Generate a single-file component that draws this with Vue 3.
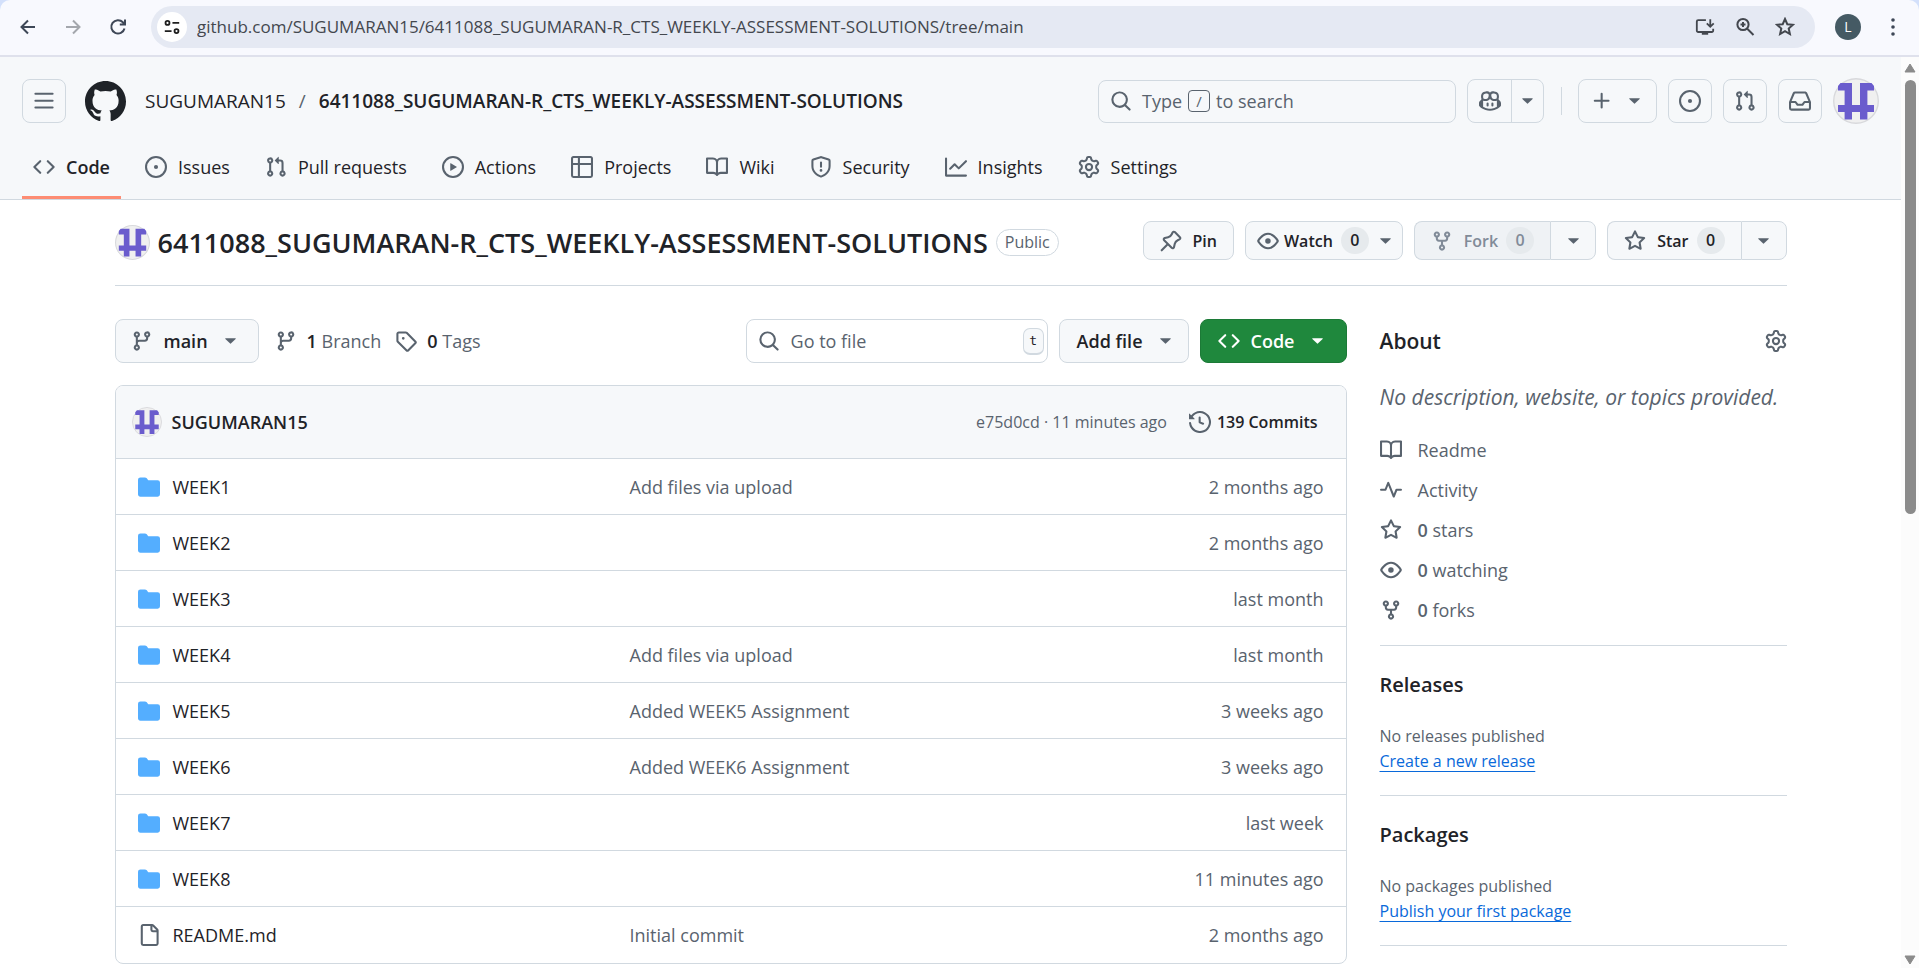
<script setup>
import { h } from 'vue'

const paths = {
  menu: 'M1 2.75A.75.75 0 0 1 1.75 2h12.5a.75.75 0 0 1 0 1.5H1.75A.75.75 0 0 1 1 2.75Zm0 5A.75.75 0 0 1 1.75 7h12.5a.75.75 0 0 1 0 1.5H1.75A.75.75 0 0 1 1 7.75ZM1.75 12h12.5a.75.75 0 0 1 0 1.5H1.75a.75.75 0 0 1 0-1.5Z',
  github: 'M8 0c4.42 0 8 3.58 8 8a8.013 8.013 0 0 1-5.45 7.59c-.4.08-.55-.17-.55-.38 0-.27.01-1.13.01-2.2 0-.75-.25-1.23-.54-1.48 1.78-.2 3.65-.88 3.65-3.95 0-.88-.31-1.59-.82-2.15.08-.2.36-1.02-.08-2.12 0 0-.67-.22-2.2.82-.64-.18-1.32-.27-2-.27-.68 0-1.36.09-2 .27-1.53-1.03-2.2-.82-2.2-.82-.44 1.1-.16 1.92-.08 2.12-.51.56-.82 1.28-.82 2.15 0 3.06 1.86 3.75 3.64 3.95-.23.2-.44.55-.51 1.07-.46.21-1.61.55-2.33-.66-.15-.24-.6-.83-1.23-.82-.67.01-.27.38.01.53.34.19.73.9.82 1.13.16.45.68 1.31 2.69.94 0 .67.01 1.3.01 1.49 0 .21-.15.45-.55.38A7.995 7.995 0 0 1 0 8c0-4.42 3.58-8 8-8Z',
  code: 'm11.28 3.22 4.25 4.25a.75.75 0 0 1 0 1.06l-4.25 4.25a.749.749 0 0 1-1.275-.326.749.749 0 0 1 .215-.734L13.94 8l-3.72-3.72a.749.749 0 0 1 .326-1.275.749.749 0 0 1 .734.215Zm-6.56 0a.751.751 0 0 1 1.042.018.751.751 0 0 1 .018 1.042L2.06 8l3.72 3.72a.749.749 0 0 1-.326 1.275.749.749 0 0 1-.734-.215L.47 8.53a.75.75 0 0 1 0-1.06Z',
  issue: 'M8 9.5a1.5 1.5 0 1 0 0-3 1.5 1.5 0 0 0 0 3ZM8 0a8 8 0 1 1 0 16A8 8 0 0 1 8 0ZM1.5 8a6.5 6.5 0 1 0 13 0 6.5 6.5 0 0 0-13 0Z',
  pull: 'M1.5 3.25a2.25 2.25 0 1 1 3 2.122v5.256a2.251 2.251 0 1 1-1.5 0V5.372A2.25 2.25 0 0 1 1.5 3.25Zm5.677-.177L9.573.677A.25.25 0 0 1 10 .854V2.5h1A2.5 2.5 0 0 1 13.5 5v5.628a2.251 2.251 0 1 1-1.5 0V5a1 1 0 0 0-1-1h-1v1.646a.25.25 0 0 1-.427.177L7.177 3.427a.25.25 0 0 1 0-.354ZM3.75 2.5a.75.75 0 1 0 0 1.5.75.75 0 0 0 0-1.5Zm0 9.5a.75.75 0 1 0 0 1.5.75.75 0 0 0 0-1.5Zm8.25.75a.75.75 0 1 0 1.5 0 .75.75 0 0 0-1.5 0Z',
  play: 'M8 0a8 8 0 1 1 0 16A8 8 0 0 1 8 0ZM1.5 8a6.5 6.5 0 1 0 13 0 6.5 6.5 0 0 0-13 0Zm4.879-2.773 4.264 2.559a.25.25 0 0 1 0 .428l-4.264 2.559A.25.25 0 0 1 6 10.559V5.442a.25.25 0 0 1 .379-.215Z',
  table: 'M0 1.75C0 .784.784 0 1.75 0h12.5C15.216 0 16 .784 16 1.75v12.5A1.75 1.75 0 0 1 14.25 16H1.75A1.75 1.75 0 0 1 0 14.25ZM6.5 6.5v8h7.75a.25.25 0 0 0 .25-.25V6.5Zm8-1.5V1.75a.25.25 0 0 0-.25-.25H6.5V5Zm-13 1.5v7.75c0 .138.112.25.25.25H5v-8ZM5 5V1.5H1.75a.25.25 0 0 0-.25.25V5Z',
  book: 'M0 1.75A.75.75 0 0 1 .75 1h4.253c1.227 0 2.317.59 3 1.501A3.743 3.743 0 0 1 11.006 1h4.245a.75.75 0 0 1 .75.75v10.5a.75.75 0 0 1-.75.75h-4.507a2.25 2.25 0 0 0-1.591.659l-.622.621a.75.75 0 0 1-1.06 0l-.622-.621A2.25 2.25 0 0 0 5.258 13H.75a.75.75 0 0 1-.75-.75Zm7.251 10.324.004-5.073-.002-2.253A2.25 2.25 0 0 0 5.003 2.5H1.5v9h3.757a3.75 3.75 0 0 1 1.994.574ZM8.755 4.75l-.004 7.322a3.752 3.752 0 0 1 1.992-.572H14.5v-9h-3.495a2.25 2.25 0 0 0-2.25 2.25Z',
  shield: 'M7.467.133a1.748 1.748 0 0 1 1.066 0l5.25 1.68A1.75 1.75 0 0 1 15 3.48V7c0 1.566-.32 3.182-1.303 4.682-.983 1.498-2.585 2.813-5.032 3.855a1.697 1.697 0 0 1-1.33 0c-2.447-1.042-4.049-2.357-5.032-3.855C1.32 10.182 1 8.566 1 7V3.48a1.75 1.75 0 0 1 1.217-1.667Zm.61 1.429a.25.25 0 0 0-.153 0l-5.25 1.68a.25.25 0 0 0-.174.238V7c0 1.358.275 2.666 1.057 3.86.784 1.194 2.121 2.34 4.366 3.297a.196.196 0 0 0 .154 0c2.245-.956 3.582-2.104 4.366-3.298C13.225 9.666 13.5 8.36 13.5 7V3.48a.251.251 0 0 0-.174-.237l-5.25-1.68ZM8.75 4.75v3a.75.75 0 0 1-1.5 0v-3a.75.75 0 0 1 1.5 0ZM9 10.5a1 1 0 1 1-2 0 1 1 0 0 1 2 0Z',
  graph: 'M1.5 1.75V13.5h13.75a.75.75 0 0 1 0 1.5H.75a.75.75 0 0 1-.75-.75V1.75a.75.75 0 0 1 1.5 0Zm14.28 2.53-5.25 5.25a.75.75 0 0 1-1.06 0L7 7.06 4.28 9.78a.751.751 0 0 1-1.042-.018.751.751 0 0 1-.018-1.042l3.25-3.25a.75.75 0 0 1 1.06 0L10 7.94l4.72-4.72a.751.751 0 0 1 1.042.018.751.751 0 0 1 .018 1.042Z',
  gear: 'M8 0a8.2 8.2 0 0 1 .701.031C9.444.095 9.99.645 10.16 1.29l.288 1.107c.018.066.079.158.212.224.231.114.454.243.668.386.123.082.233.09.299.071l1.103-.303c.644-.176 1.392.021 1.82.63.27.385.506.792.704 1.218.315.675.111 1.422-.364 1.891l-.814.806c-.049.048-.098.147-.088.294.016.257.016.515 0 .772-.01.147.038.246.088.294l.814.806c.475.469.679 1.216.364 1.891a7.977 7.977 0 0 1-.704 1.217c-.428.61-1.176.807-1.82.63l-1.102-.302c-.067-.019-.177-.011-.3.071a5.909 5.909 0 0 1-.668.386c-.133.066-.194.158-.211.224l-.29 1.106c-.168.646-.715 1.196-1.458 1.26a8.006 8.006 0 0 1-1.402 0c-.743-.064-1.289-.614-1.458-1.26l-.289-1.106c-.018-.066-.079-.158-.212-.224a5.738 5.738 0 0 1-.668-.386c-.123-.082-.233-.09-.299-.071l-1.103.303c-.644.176-1.392-.021-1.82-.63a8.12 8.12 0 0 1-.704-1.218c-.315-.675-.111-1.422.363-1.891l.815-.806c.05-.048.098-.147.088-.294a6.214 6.214 0 0 1 0-.772c.01-.147-.038-.246-.088-.294l-.815-.806C.635 6.045.431 5.298.746 4.623a7.92 7.92 0 0 1 .704-1.217c.428-.61 1.176-.807 1.82-.63l1.102.302c.067.019.177.011.3-.071.214-.143.437-.272.668-.386.133-.066.194-.158.211-.224l.29-1.106C6.009.645 6.556.095 7.299.03 7.53.01 7.764 0 8 0Zm-.571 1.525c-.036.003-.108.036-.137.146l-.289 1.105c-.147.561-.549.967-.998 1.189-.173.086-.34.183-.5.29-.417.278-.97.423-1.529.27l-1.103-.303c-.109-.03-.175.016-.195.045-.22.312-.412.644-.573.99-.014.031-.021.11.059.19l.815.806c.411.406.562.957.53 1.456a4.709 4.709 0 0 0 0 .582c.032.499-.119 1.05-.53 1.456l-.815.806c-.081.08-.073.159-.059.19.162.346.353.677.573.989.02.03.085.076.195.046l1.102-.303c.56-.153 1.113-.008 1.53.27.161.107.328.204.501.29.447.222.85.629.997 1.189l.289 1.105c.029.109.101.143.137.146a6.6 6.6 0 0 0 1.142 0c.036-.003.108-.036.137-.146l.289-1.105c.147-.561.549-.967.998-1.189.173-.086.34-.183.5-.29.417-.278.97-.423 1.529-.27l1.103.303c.109.029.175-.016.195-.045.22-.313.411-.644.573-.99.014-.031.021-.11-.059-.19l-.815-.806c-.411-.406-.562-.957-.53-1.456a4.709 4.709 0 0 0 0-.582c-.032-.499.119-1.05.53-1.456l.815-.806c.081-.08.073-.159.059-.19a6.464 6.464 0 0 0-.573-.989c-.02-.03-.085-.076-.195-.046l-1.102.303c-.56.153-1.113.008-1.53-.27a4.44 4.44 0 0 0-.501-.29c-.447-.222-.85-.629-.997-1.189l-.289-1.105c-.029-.11-.101-.143-.137-.146a6.6 6.6 0 0 0-1.142 0ZM11 8a3 3 0 1 1-6 0 3 3 0 0 1 6 0ZM9.5 8a1.5 1.5 0 1 0-3.001.001A1.5 1.5 0 0 0 9.5 8Z',
  search: 'M10.68 11.74a6 6 0 0 1-7.922-8.982 6 6 0 0 1 8.982 7.922l3.04 3.04a.749.749 0 0 1-.326 1.275.749.749 0 0 1-.734-.215ZM11.5 7a4.499 4.499 0 1 0-8.997 0A4.499 4.499 0 0 0 11.5 7Z',
  plus: 'M7.75 2a.75.75 0 0 1 .75.75V7h4.25a.75.75 0 0 1 0 1.5H8.5v4.25a.75.75 0 0 1-1.5 0V8.5H2.75a.75.75 0 0 1 0-1.5H7V2.75A.75.75 0 0 1 7.75 2Z',
  inbox: 'M2.8 2.06A1.75 1.75 0 0 1 4.41 1h7.18c.7 0 1.333.417 1.61 1.06l2.74 6.395c.04.093.06.194.06.295v4.5A1.75 1.75 0 0 1 14.25 15H1.75A1.75 1.75 0 0 1 0 13.25v-4.5c0-.101.02-.202.06-.295Zm1.61.44a.25.25 0 0 0-.23.152L1.887 8H4.75a.75.75 0 0 1 .6.3L6.625 10h2.75l1.275-1.7a.75.75 0 0 1 .6-.3h2.863L11.82 2.652a.25.25 0 0 0-.23-.152Zm10.09 7h-2.875l-1.275 1.7a.75.75 0 0 1-.6.3h-3.5a.75.75 0 0 1-.6-.3L4.375 9.5H1.5v3.75c0 .138.112.25.25.25h12.5a.25.25 0 0 0 .25-.25Z',
  copilot: 'M7.998 15.035c-4.562 0-7.873-2.914-7.998-3.749V9.338c.085-.628.677-1.686 1.588-2.065.013-.07.024-.143.036-.218.029-.183.06-.384.126-.612-.201-.508-.254-1.084-.254-1.656 0-.87.128-1.769.693-2.484.579-.733 1.494-1.124 2.724-1.261 1.206-.134 2.262.034 2.944.765.05.053.096.108.139.165.044-.057.094-.112.143-.165.682-.731 1.738-.899 2.944-.765 1.23.137 2.145.528 2.724 1.261.566.715.693 1.614.693 2.484 0 .572-.053 1.148-.254 1.656.066.228.098.429.126.612.012.076.024.148.037.218.924.385 1.522 1.471 1.591 2.095v1.872c0 .766-3.351 3.795-8.002 3.795Zm0-1.485c2.28 0 4.584-1.11 5.002-1.433V7.862l-.023-.116c-.49.21-1.075.291-1.727.291-1.146 0-2.059-.327-2.71-.991A3.222 3.222 0 0 1 8 6.303a3.24 3.24 0 0 1-.544.743c-.65.664-1.563.991-2.71.991-.652 0-1.236-.081-1.727-.291l-.023.116v4.255c.419.323 2.722 1.433 5.002 1.433ZM6.762 2.83c-.193-.206-.637-.413-1.682-.297-1.019.113-1.479.404-1.713.7-.247.312-.369.789-.369 1.554 0 .793.129 1.171.308 1.371.162.181.519.379 1.442.379.853 0 1.339-.235 1.638-.54.315-.322.527-.827.617-1.553.117-.935-.037-1.395-.241-1.614Zm4.155-.297c-1.044-.116-1.488.091-1.681.297-.204.219-.359.679-.242 1.614.091.726.303 1.231.618 1.553.299.305.784.54 1.638.54.922 0 1.28-.198 1.442-.379.179-.2.308-.578.308-1.371 0-.765-.123-1.242-.37-1.554-.233-.296-.693-.587-1.713-.7ZM6.25 9.037a.75.75 0 0 1 .75.75v1.501a.75.75 0 0 1-1.5 0V9.787a.75.75 0 0 1 .75-.75Zm4.25.75v1.501a.75.75 0 0 1-1.5 0V9.787a.75.75 0 0 1 1.5 0Z',
  pin: 'm11.294.984 3.722 3.722a1.75 1.75 0 0 1-.504 2.826l-1.327.613a3.089 3.089 0 0 0-1.707 2.084l-.584 2.454c-.317 1.332-1.972 1.8-2.94.832L5.75 11.311 1.78 15.28a.749.749 0 1 1-1.06-1.06l3.969-3.97-2.204-2.204c-.968-.968-.5-2.623.832-2.94l2.454-.584a3.08 3.08 0 0 0 2.084-1.707l.613-1.327a1.75 1.75 0 0 1 2.826-.504ZM6.283 9.723l2.732 2.731a.25.25 0 0 0 .42-.119l.584-2.454a4.586 4.586 0 0 1 2.537-3.098l1.328-.613a.25.25 0 0 0 .072-.404l-3.722-3.722a.25.25 0 0 0-.404.072l-.613 1.328a4.584 4.584 0 0 1-3.098 2.537l-2.454.584a.25.25 0 0 0-.119.42l2.731 2.732Z',
  eye: 'M8 2c1.981 0 3.671.992 4.933 2.078 1.27 1.091 2.187 2.345 2.637 3.023a1.62 1.62 0 0 1 0 1.798c-.45.678-1.367 1.932-2.637 3.023C11.67 13.008 9.981 14 8 14c-1.981 0-3.671-.992-4.933-2.078C1.797 10.83.88 9.576.43 8.898a1.62 1.62 0 0 1 0-1.798c.45-.677 1.367-1.931 2.637-3.022C4.33 2.992 6.019 2 8 2ZM1.679 7.932a.12.12 0 0 0 0 .136c.411.622 1.241 1.75 2.366 2.717C5.176 11.758 6.527 12.5 8 12.5c1.473 0 2.825-.742 3.955-1.715 1.124-.967 1.954-2.096 2.366-2.717a.12.12 0 0 0 0-.136c-.412-.621-1.242-1.75-2.366-2.717C10.824 4.242 9.473 3.5 8 3.5c-1.473 0-2.825.742-3.955 1.715-1.124.967-1.954 2.096-2.366 2.717ZM8 10a2 2 0 1 1-.001-3.999A2 2 0 0 1 8 10Z',
  fork: 'M5 5.372v.878c0 .414.336.75.75.75h4.5a.75.75 0 0 0 .75-.75v-.878a2.25 2.25 0 1 1 1.5 0v.878a2.25 2.25 0 0 1-2.25 2.25h-1.5v2.128a2.251 2.251 0 1 1-1.5 0V8.5h-1.5A2.25 2.25 0 0 1 3.5 6.25v-.878a2.25 2.25 0 1 1 1.5 0ZM5 3.25a.75.75 0 1 0-1.5 0 .75.75 0 0 0 1.5 0Zm6.75.75a.75.75 0 1 0 0-1.5.75.75 0 0 0 0 1.5Zm-3 8.75a.75.75 0 1 0-1.5 0 .75.75 0 0 0 1.5 0Z',
  star: 'M8 .25a.75.75 0 0 1 .673.418l1.882 3.815 4.21.612a.75.75 0 0 1 .416 1.279l-3.046 2.97.719 4.192a.751.751 0 0 1-1.088.791L8 12.347l-3.766 1.98a.75.75 0 0 1-1.088-.79l.72-4.194L.818 6.374a.75.75 0 0 1 .416-1.28l4.21-.611L7.327.668A.75.75 0 0 1 8 .25Zm0 2.445L6.615 5.5a.75.75 0 0 1-.564.41l-3.097.45 2.24 2.184a.75.75 0 0 1 .216.664l-.528 3.084 2.769-1.456a.75.75 0 0 1 .698 0l2.77 1.456-.53-3.084a.75.75 0 0 1 .216-.664l2.24-2.183-3.096-.45a.75.75 0 0 1-.564-.41L8 2.694Z',
  branch: 'M9.5 3.25a2.25 2.25 0 1 1 3 2.122V6A2.5 2.5 0 0 1 10 8.5H6a1 1 0 0 0-1 1v1.128a2.251 2.251 0 1 1-1.5 0V5.372a2.25 2.25 0 1 1 1.5 0v1.836A2.493 2.493 0 0 1 6 7h4a1 1 0 0 0 1-1v-.628A2.25 2.25 0 0 1 9.5 3.25Zm-6 0a.75.75 0 1 0 1.5 0 .75.75 0 0 0-1.5 0Zm8.25-.75a.75.75 0 1 0 0 1.5.75.75 0 0 0 0-1.5ZM4.25 12a.75.75 0 1 0 0 1.5.75.75 0 0 0 0-1.5Z',
  tag: 'M1 7.775V2.75C1 1.784 1.784 1 2.75 1h5.025c.464 0 .91.184 1.238.513l6.25 6.25a1.75 1.75 0 0 1 0 2.474l-5.026 5.026a1.75 1.75 0 0 1-2.474 0l-6.25-6.25A1.752 1.752 0 0 1 1 7.775Zm1.5 0c0 .066.026.13.073.177l6.25 6.25a.25.25 0 0 0 .354 0l5.025-5.025a.25.25 0 0 0 0-.354l-6.25-6.25a.25.25 0 0 0-.177-.073H2.75a.25.25 0 0 0-.25.25ZM6 5a1 1 0 1 1 0 2 1 1 0 0 1 0-2Z',
  history: 'm.427 1.927 1.215 1.215a8.002 8.002 0 1 1-1.6 5.685.75.75 0 1 1 1.493-.154 6.5 6.5 0 1 0 1.18-4.458l1.358 1.358A.25.25 0 0 1 3.896 6H.25A.25.25 0 0 1 0 5.75V2.104a.25.25 0 0 1 .427-.177ZM7.75 4a.75.75 0 0 1 .75.75v2.992l2.028.812a.75.75 0 0 1-.557 1.392l-2.5-1A.751.751 0 0 1 7 8.25v-3.5A.75.75 0 0 1 7.75 4Z',
  folder: 'M1.75 1A1.75 1.75 0 0 0 0 2.75v10.5C0 14.216.784 15 1.75 15h12.5A1.75 1.75 0 0 0 16 13.25v-8.5A1.75 1.75 0 0 0 14.25 3H7.5a.25.25 0 0 1-.2-.1l-.9-1.2C6.07 1.26 5.55 1 5 1H1.75Z',
  file: 'M2 1.75C2 .784 2.784 0 3.75 0h6.586c.464 0 .909.184 1.237.513l2.914 2.914c.329.328.513.773.513 1.237v9.586A1.75 1.75 0 0 1 13.25 16h-9.5A1.75 1.75 0 0 1 2 14.25Zm1.75-.25a.25.25 0 0 0-.25.25v12.5c0 .138.112.25.25.25h9.5a.25.25 0 0 0 .25-.25V6h-2.75A1.75 1.75 0 0 1 9 4.25V1.5Zm6.75.062V4.25c0 .138.112.25.25.25h2.688l-.011-.013-2.914-2.914-.013-.011Z',
  pulse: 'M6 2c.306 0 .582.187.696.471L10 10.731l1.304-3.26A.751.751 0 0 1 12 7h3.25a.75.75 0 0 1 0 1.5h-2.742l-1.812 4.528a.751.751 0 0 1-1.392 0L6 4.77 4.696 8.03A.75.75 0 0 1 4 8.5H.75a.75.75 0 0 1 0-1.5h2.742l1.812-4.529A.751.751 0 0 1 6 2Z',
}

const Icon = (props) =>
  h('svg', { class: 'icon', viewBox: '0 0 16 16', 'aria-hidden': 'true' }, [
    h('path', { d: paths[props.name], fill: 'currentColor' }),
  ])
Icon.props = ['name']

const Caret = () =>
  h('svg', { class: 'caret', viewBox: '0 0 12 6', 'aria-hidden': 'true' }, [
    h('path', { d: 'M.8 0h10.4c.5 0 .7.5.4.8L6.4 5.8a.6.6 0 0 1-.8 0L.4.8C.1.5.3 0 .8 0Z', fill: 'currentColor' }),
  ])

const Avatar = () =>
  h('svg', { class: 'avatar', viewBox: '0 0 46 46', role: 'img', 'aria-label': 'SUGUMARAN15' }, [
    h('circle', { cx: 23, cy: 23, r: 22.3, fill: '#f0f0f0', stroke: '#d8d9dc', 'stroke-width': 1.4 }),
    h('path', {
      d: 'M7.5 5H19v22h8V5h11.5l2.5 3v4.4h-6.600V27H41v7h-6.600v7.500H27V34h-8v7.500h-7.400V34H5v-7h6.600V12.400H5V8Z',
      fill: '#6a5ccd',
    }),
  ])

const owner = 'SUGUMARAN15'
const repo = '6411088_SUGUMARAN-R_CTS_WEEKLY-ASSESSMENT-SOLUTIONS'
const url = `github.com/${owner}/${repo}/tree/main`

const tabs = [
  { label: 'Code', icon: 'code', active: true },
  { label: 'Issues', icon: 'issue' },
  { label: 'Pull requests', icon: 'pull' },
  { label: 'Actions', icon: 'play' },
  { label: 'Projects', icon: 'table' },
  { label: 'Wiki', icon: 'book' },
  { label: 'Security', icon: 'shield' },
  { label: 'Insights', icon: 'graph' },
  { label: 'Settings', icon: 'gear' },
]

const files = [
  { name: 'WEEK1', message: 'Add files via upload', date: '2 months ago' },
  { name: 'WEEK2', message: '', date: '2 months ago' },
  { name: 'WEEK3', message: '', date: 'last month' },
  { name: 'WEEK4', message: 'Add files via upload', date: 'last month' },
  { name: 'WEEK5', message: 'Added WEEK5 Assignment', date: '3 weeks ago' },
  { name: 'WEEK6', message: 'Added WEEK6 Assignment', date: '3 weeks ago' },
  { name: 'WEEK7', message: '', date: 'last week' },
  { name: 'WEEK8', message: '', date: '11 minutes ago' },
  { name: 'README.md', message: 'Initial commit', date: '2 months ago', file: true },
]

const facts = [
  { icon: 'book', label: 'Readme' },
  { icon: 'pulse', label: 'Activity' },
  { icon: 'star', count: 0, label: 'stars' },
  { icon: 'eye', count: 0, label: 'watching' },
  { icon: 'fork', count: 0, label: 'forks' },
]
</script>

<template>
  <div class="window">
    <div class="browser">
      <button class="nav-button" aria-label="Back">
        <svg class="chrome-icon" viewBox="0 0 20 20"><path d="M17 10H4M10 3.500 3.500 10l6.500 6.500" /></svg>
      </button>
      <button class="nav-button muted" aria-label="Forward">
        <svg class="chrome-icon" viewBox="0 0 20 20"><path d="M3 10h13M10 3.500l6.500 6.500-6.500 6.500" /></svg>
      </button>
      <button class="nav-button" aria-label="Reload">
        <svg class="chrome-icon" viewBox="0 0 20 20"><path d="M16.500 11.500a6.700 6.700 0 1 1-1.600-6.200l2 2M17 2.500V7.600H11.800" /></svg>
      </button>
      <div class="address">
        <button class="site-info" aria-label="View site information">
          <svg class="chrome-icon" viewBox="0 0 20 20"><circle cx="5" cy="5.500" r="2.200" /><circle cx="15" cy="14.500" r="2.200" /><path d="M10.500 5.500H18M2 14.500h7.500" /></svg>
        </button>
        <input class="url" type="text" :value="url" aria-label="Address" />
        <button class="address-button" aria-label="Install">
          <svg class="chrome-icon" viewBox="0 0 22 20"><path d="M12 2.500H3.500a1.500 1.500 0 0 0-1.500 1.500v10a1.500 1.500 0 0 0 1.500 1.500h15a1.500 1.500 0 0 0 1.500-1.500v-2M16.800 1.500v8M13 6l3.800 3.800L20.600 6" /><path class="solid" d="M7.500 15.500h7v3h-7Z" /></svg>
        </button>
        <button class="address-button" aria-label="Zoom">
          <svg class="chrome-icon" viewBox="0 0 20 20"><circle cx="8" cy="7.500" r="5.600" /><path d="m12 11.500 6.500 6.500M8 5v5M5.500 7.500h5" /></svg>
        </button>
        <button class="address-button" aria-label="Bookmark">
          <svg class="chrome-icon" viewBox="0 0 20 20"><path d="m10 2 2.300 5.200 5.600.5-4.200 3.800 1.200 5.500-4.900-2.900L5.100 17l1.200-5.500-4.200-3.800 5.600-.5Z" /></svg>
        </button>
      </div>
      <button class="profile" aria-label="Profile">L</button>
      <button class="nav-button kebab" aria-label="Menu">
        <svg class="chrome-icon" viewBox="0 0 20 20"><g class="solid"><circle cx="10" cy="3" r="1.800" /><circle cx="10" cy="10" r="1.800" /><circle cx="10" cy="17" r="1.800" /></g></svg>
      </button>
    </div>

    <div class="viewport">
      <div class="page">
        <header class="header">
          <div class="header-row">
            <button class="square" aria-label="Open menu"><Icon name="menu" /></button>
            <a class="logo" href="#" aria-label="Homepage"><Icon name="github" /></a>
            <nav class="crumbs" aria-label="Breadcrumb">
              <a href="#">{{ owner }}</a><span class="slash">/</span><a class="strong" href="#">{{ repo }}</a>
            </nav>
            <button class="search">
              <Icon name="search" /><span>Type</span><kbd class="slash-key">/</kbd><span>to search</span>
            </button>
            <div class="split">
              <button class="copilot" aria-label="Copilot"><Icon name="copilot" /></button>
              <button class="copilot-more" aria-label="Copilot menu"><Caret /></button>
            </div>
            <span class="divider"></span>
            <button class="square create" aria-label="Create new"><Icon name="plus" /><Caret /></button>
            <button class="square" aria-label="Issues"><Icon name="issue" /></button>
            <button class="square" aria-label="Pull requests"><Icon name="pull" /></button>
            <button class="square" aria-label="Notifications"><Icon name="inbox" /></button>
            <button class="user" aria-label="User menu"><Avatar /></button>
          </div>
          <nav class="tabs" aria-label="Repository">
            <a v-for="tab in tabs" :key="tab.label" href="#" class="tab" :class="{ active: tab.active }">
              <Icon :name="tab.icon" /><span>{{ tab.label }}</span>
            </a>
          </nav>
        </header>

        <main class="content">
          <div class="title-row">
            <Avatar />
            <h1>{{ repo }}</h1>
            <span class="badge">Public</span>
            <div class="actions">
              <button class="small pin"><Icon name="pin" />Pin</button>
              <button class="small watch"><Icon name="eye" />Watch<span class="counter">0</span><Caret /></button>
              <div class="pair">
                <button class="small fork" disabled><Icon name="fork" />Fork<span class="counter">0</span></button>
                <button class="small more" aria-label="Fork menu"><Caret /></button>
              </div>
              <div class="pair">
                <button class="small star"><Icon name="star" />Star<span class="counter">0</span></button>
                <button class="small more" aria-label="Star menu"><Caret /></button>
              </div>
            </div>
          </div>

          <div class="columns">
            <section class="files">
              <div class="toolbar">
                <button class="medium ref"><Icon name="branch" />main<Caret /></button>
                <a class="stat" href="#"><Icon name="branch" /><span><b>1</b> Branch</span></a>
                <a class="stat" href="#"><Icon name="tag" /><span><b>0</b> Tags</span></a>
                <label class="finder">
                  <Icon name="search" />
                  <input type="text" placeholder="Go to file" aria-label="Go to file" />
                  <kbd>t</kbd>
                </label>
                <button class="medium add">Add file<Caret /></button>
                <button class="medium primary"><Icon name="code" />Code<Caret /></button>
              </div>

              <div class="box">
                <div class="commit">
                  <Avatar />
                  <a class="author" href="#">{{ owner }}</a>
                  <span class="hash">e75d0cd · 11 minutes ago</span>
                  <a class="commits" href="#"><Icon name="history" />139 Commits</a>
                </div>
                <table>
                  <tbody>
                    <tr v-for="f in files" :key="f.name">
                      <td class="name">
                        <a href="#"><Icon :name="f.file ? 'file' : 'folder'" :class="{ folder: !f.file }" />{{ f.name }}</a>
                      </td>
                      <td class="message"><a v-if="f.message" href="#">{{ f.message }}</a></td>
                      <td class="date">{{ f.date }}</td>
                    </tr>
                  </tbody>
                </table>
              </div>
            </section>

            <aside class="side">
              <section class="about">
                <div class="about-head">
                  <h2>About</h2>
                  <button class="plain" aria-label="Edit details"><Icon name="gear" /></button>
                </div>
                <p class="description">No description, website, or topics provided.</p>
                <ul>
                  <li v-for="f in facts" :key="f.label">
                    <a href="#"><Icon :name="f.icon" /><span><b v-if="f.count !== undefined">{{ f.count }}</b> {{ f.label }}</span></a>
                  </li>
                </ul>
              </section>
              <section class="group">
                <h2>Releases</h2>
                <p>No releases published</p>
                <a href="#">Create a new release</a>
              </section>
              <section class="group">
                <h2>Packages</h2>
                <p>No packages published</p>
                <a href="#">Publish your first package</a>
              </section>
            </aside>
          </div>
        </main>
      </div>

      <div class="scrollbar" aria-hidden="true">
        <svg viewBox="0 0 12 10"><path d="M6 1 11 9H1Z" /></svg>
        <div class="track"><div class="thumb"></div></div>
        <svg viewBox="0 0 12 10"><path d="M6 9 11 1H1Z" /></svg>
      </div>
    </div>
  </div>
</template>

<style>
body {
  margin: 0;
  background: #d3e0fb;
}
</style>

<style scoped>
* {
  box-sizing: border-box;
}
.window {
  min-height: 100vh;
  display: flex;
  flex-direction: column;
  font-family: 'Open Sans', 'Noto Sans', sans-serif;
  font-size: 18px;
  line-height: 28px;
  color: #1f2328;
}
button,
input {
  font: inherit;
  color: inherit;
  margin: 0;
  padding: 0;
  border: 0;
  background: none;
}
a {
  color: inherit;
  text-decoration: none;
}
b {
  font-weight: 600;
}
h1,
h2,
p,
ul {
  margin: 0;
  padding: 0;
}
.icon {
  width: 22px;
  height: 22px;
  flex: none;
  display: block;
  color: #59636e;
}
.caret {
  width: 11px;
  height: 6px;
  flex: none;
  display: block;
  color: #59636e;
}
.avatar {
  display: block;
  flex: none;
}

/* browser bar */
.browser {
  display: flex;
  align-items: center;
  height: 57px;
  padding: 0 14px 2px 16px;
  background: #f8f9fe;
  border-bottom: 2px solid #dfe1ec;
  border-radius: 10px 10px 0 0;
}
.nav-button {
  width: 24px;
  height: 24px;
  margin-right: 21px;
  color: #3e4757;
  display: flex;
  align-items: center;
  justify-content: center;
}
.nav-button.muted {
  color: #a4a7ad;
}
.nav-button.kebab {
  margin: 0 0 0 20px;
}
.chrome-icon {
  width: 20px;
  height: 20px;
  fill: none;
  stroke: currentColor;
  stroke-width: 2;
}
.chrome-icon .solid {
  fill: currentColor;
  stroke: none;
}
.address {
  flex: 1;
  min-width: 0;
  height: 42px;
  display: flex;
  align-items: center;
  gap: 20px;
  padding: 0 20px 0 6px;
  background: #e5e9f3;
  border-radius: 21px;
  color: #43474e;
}
.site-info {
  width: 30px;
  height: 30px;
  margin-right: -10px;
  border-radius: 50%;
  background: #fff;
  color: #1f1f1f;
  display: flex;
  align-items: center;
  justify-content: center;
}
.site-info .chrome-icon {
  width: 18px;
}
.url {
  flex: 1;
  min-width: 0;
  font-size: 17px;
  outline: 0;
}
.address-button {
  width: 20px;
  height: 20px;
  display: flex;
  justify-content: center;
}
.profile {
  width: 26px;
  height: 26px;
  margin-left: 20px;
  border-radius: 50%;
  background: #455a64;
  color: #fff;
  font-size: 14px;
  line-height: 26px;
}

/* page frame */
.viewport {
  flex: 1;
  display: flex;
  background: #fff;
}
.page {
  flex: 1;
  min-width: 0;
}
.scrollbar {
  width: 18px;
  background: #fcfcfc;
  display: flex;
  flex-direction: column;
  align-items: center;
  padding: 5px 0 2px;
}
.scrollbar svg {
  width: 12px;
  height: 12px;
  fill: #8b8b8b;
  stroke: #8b8b8b;
  stroke-linejoin: round;
}
.track {
  flex: 1;
  width: 11px;
  padding: 6px 0;
}
.thumb {
  height: 50%;
  border-radius: 6px;
  background: #8b8b8b;
}

/* repository header */
.header {
  background: #f6f8fa;
  border-bottom: 1px solid #d1d9e0;
  padding: 22px 22px 0;
}
.header-row {
  display: flex;
  align-items: center;
  height: 44px;
}
.square {
  width: 44px;
  height: 44px;
  border: 1px solid #d1d9e0;
  border-radius: 8px;
  display: flex;
  align-items: center;
  justify-content: center;
}
.logo {
  margin: 0 19px;
}
.logo .icon {
  width: 41px;
  height: 41px;
  color: #1f2328;
}
.crumbs {
  display: flex;
  align-items: center;
  font-size: 19px;
}
.slash {
  margin: 0 13px;
  color: #59636e;
}
.strong {
  font-weight: 600;
}
.search {
  width: 358px;
  height: 43px;
  margin-left: auto;
  padding: 0 11px;
  border: 1px solid #d1d9e0;
  border-radius: 8px;
  color: #59636e;
  display: flex;
  align-items: center;
  gap: 6px;
}
.search .icon {
  margin-right: 4px;
}
.slash-key {
  width: 22px;
  height: 22px;
  border: 1px solid #59636e;
  border-radius: 4px;
  font: 15px/20px 'Open Sans', 'Noto Sans', sans-serif;
  text-align: center;
}
.split {
  display: flex;
  width: 77px;
  height: 44px;
  margin-left: 11px;
  border: 1px solid #d1d9e0;
  border-radius: 8px;
}
.split button {
  flex: 1;
  display: flex;
  align-items: center;
  justify-content: center;
}
.split .copilot {
  flex: none;
  width: 44px;
  border-right: 1px solid #d1d9e0;
}
.divider {
  width: 1px;
  height: 28px;
  margin: 0 5px 0 17px;
  background: #d1d9e0;
}
.header-row .square + .square,
.user {
  margin-left: 11px;
}
.header-row .create {
  width: 79px;
  margin-left: 11px;
  padding-right: 5px;
  gap: 16px;
}
.user .avatar {
  width: 46px;
  height: 46px;
}
.tabs {
  display: flex;
  gap: 13px;
  margin-top: 11px;
}
.tab {
  height: 65px;
  padding: 4px 11px 0;
  display: flex;
  align-items: center;
  gap: 11px;
  border-bottom: 3px solid transparent;
}
.tab.active {
  font-weight: 600;
  border-bottom-color: #fd8c73;
}

/* title */
.content {
  max-width: 1672px;
  margin: 0 auto;
}
.title-row {
  display: flex;
  align-items: center;
  height: 86px;
  border-bottom: 1px solid #d1d9e0;
}
.title-row > .avatar {
  width: 35px;
  height: 35px;
}
h1 {
  margin: 0 8px;
  font-size: 27px;
  line-height: 36px;
  font-weight: 600;
}
.badge {
  padding: 0 8px;
  border: 1px solid #d1d9e0;
  border-radius: 14px;
  font-size: 16px;
  line-height: 25px;
  font-weight: 500;
  color: #59636e;
}
.actions {
  display: flex;
  gap: 11px;
  margin-left: auto;
  padding-bottom: 4px;
}
.small {
  height: 39px;
  padding: 0 16px;
  border: 1px solid #d1d9e0;
  border-radius: 8px;
  background: #f6f8fa;
  font-size: 16px;
  font-weight: 600;
  display: flex;
  align-items: center;
  justify-content: center;
}
.small .icon {
  margin-right: 11px;
}
.watch {
  padding: 0 11px;
}
.watch .icon {
  margin-right: 5px;
}
.watch .caret {
  margin-left: 11px;
}
.counter {
  min-width: 28px;
  height: 27px;
  margin-left: 8px;
  border-radius: 14px;
  background: #e6eaed;
  line-height: 27px;
  text-align: center;
}
.pair {
  display: flex;
}
.pair .small:first-child {
  border-radius: 8px 0 0 8px;
}
.fork:disabled {
  background: #eff2f5;
  color: #818b98;
  border-right: 0;
}
.fork .icon {
  color: #818b98;
}
.star {
  border-right: 0;
}
.more {
  width: 46px;
  padding: 0;
  border-radius: 0 8px 8px 0;
}

/* columns */
.columns {
  display: grid;
  grid-template-columns: minmax(0, 1fr) 407px;
  gap: 33px;
  padding-top: 33px;
}
.toolbar {
  display: flex;
  align-items: center;
  height: 44px;
}
.medium {
  height: 44px;
  padding: 0 17px;
  border: 1px solid #d1d9e0;
  border-radius: 8px;
  background: #f6f8fa;
  font-weight: 600;
  display: flex;
  align-items: center;
}
.medium .icon {
  margin-right: 11px;
}
.medium .caret {
  margin-left: 17px;
}
.ref {
  margin-right: 16px;
  padding: 0 22px 0 15px;
}
.stat {
  display: flex;
  align-items: center;
  gap: 10px;
  margin-right: 14px;
  color: #59636e;
}
.stat b {
  color: #1f2328;
}
.finder {
  width: 302px;
  height: 44px;
  margin-left: auto;
  padding: 0 3px 0 11px;
  border: 1px solid #d1d9e0;
  border-radius: 8px;
  display: flex;
  align-items: center;
  gap: 11px;
}
.finder input {
  flex: 1;
  min-width: 0;
}
.finder input::placeholder {
  color: #59636e;
  opacity: 1;
}
.finder kbd {
  width: 21px;
  height: 27px;
  border: 1px solid #d1d9e0;
  border-bottom-width: 2px;
  border-radius: 7px;
  background: #f6f8fa;
  font: 13px/24px 'DejaVu Sans Mono', monospace;
  text-align: center;
}
.add {
  margin: 0 11px;
}
.primary {
  padding-right: 23px;
  background: #1f883d;
  border-color: #1c7a37;
  color: #fff;
}
.primary .icon,
.primary .caret {
  color: #fff;
}

/* file box */
.box {
  margin-top: 22px;
  border: 1px solid #d1d9e0;
  border-radius: 8px;
  overflow: hidden;
}
.commit {
  display: flex;
  align-items: center;
  height: 72px;
  padding: 0 28px 0 16px;
  background: #f6f8fa;
}
.commit .avatar {
  width: 30px;
  height: 30px;
}
.author {
  margin-left: 10px;
  font-weight: 600;
}
.hash {
  margin-left: auto;
  font-size: 16px;
  color: #59636e;
}
.commits {
  margin-left: 22px;
  display: flex;
  align-items: center;
  gap: 6px;
  font-size: 16px;
  font-weight: 600;
}
table {
  width: 100%;
  border-collapse: collapse;
  table-layout: fixed;
}
td {
  height: 56px;
  padding: 0;
  border-top: 1px solid #d1d9e0;
}
.name {
  width: 514px;
  padding-left: 22px;
}
.name a {
  display: flex;
  align-items: center;
  gap: 13px;
}
.name .folder {
  color: #54aeff;
}
.message,
.date {
  color: #59636e;
}
.date {
  width: 220px;
  padding-right: 22px;
  text-align: right;
}

/* sidebar */
.about-head {
  display: flex;
  align-items: center;
  justify-content: space-between;
  height: 44px;
}
h2 {
  font-size: 21px;
  line-height: 32px;
  font-weight: 600;
}
.description {
  margin-top: 17px;
  font-size: 21px;
  line-height: 34px;
  font-style: italic;
  color: #59636e;
}
.about ul {
  margin-top: 16px;
  list-style: none;
}
.about li {
  height: 40px;
}
.about li a {
  display: flex;
  align-items: center;
  height: 40px;
  gap: 16px;
  color: #59636e;
}
.about,
.group {
  border-bottom: 1px solid #d1d9e0;
}
.about {
  padding-bottom: 15px;
}
.group {
  padding: 23px 0 21px;
  font-size: 16px;
  line-height: 25px;
}
.group h2 {
  font-size: 20px;
}
.group p {
  margin-top: 23px;
  color: #59636e;
}
.group a {
  color: #0969da;
  text-decoration: underline;
  text-underline-offset: 4px;
}
</style>
